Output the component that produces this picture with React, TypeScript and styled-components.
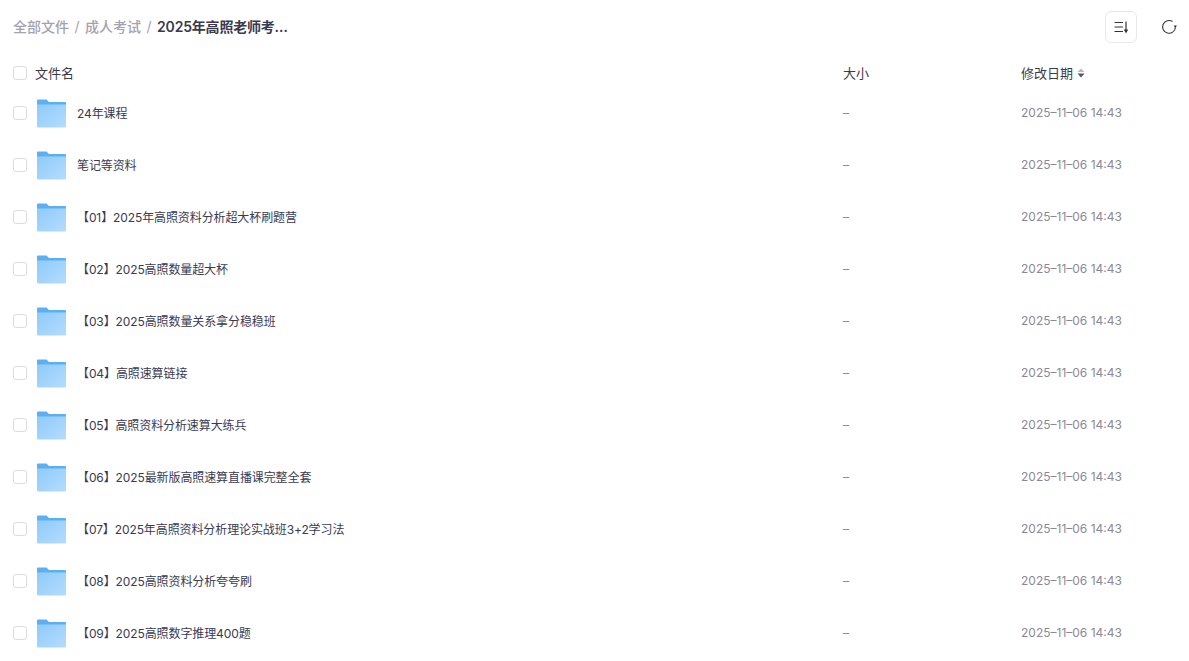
import { createGlobalStyle } from 'styled-components'
import styled from 'styled-components'

const GlobalStyle = createGlobalStyle`
  html, body {
    margin: 0;
    height: 100%;
    overflow: hidden;
    background: #fff;
  }
  * {
    box-sizing: border-box;
  }
`

const Page = styled.div`
  width: 1189px;
  height: 661px;
  overflow: hidden;
  padding: 0 4px 0 13px;
  font-family: Inter, "Noto Sans CJK SC", sans-serif;
  color: #25262f;
`

const TopBar = styled.header`
  height: 54px;
  margin-bottom: 5px;
  display: flex;
  align-items: center;
  justify-content: space-between;
`

const Crumbs = styled.nav`
  display: flex;
  align-items: center;
  padding-bottom: 2px;
  font-size: 14px;
  font-weight: 500;
  color: #a3a3ad;
`

const Sep = styled.span`
  margin: 0 5.5px;
  font-weight: 400;
`

const Current = styled.span`
  color: #3a3a4e;
  font-weight: 600;
  letter-spacing: -0.2px;
`

const Tools = styled.div`
  display: flex;
  align-items: center;
  gap: 16px;
`

const SortButton = styled.button`
  width: 32px;
  height: 32px;
  padding: 0;
  display: flex;
  align-items: center;
  justify-content: center;
  background: #fff;
  border: 1px solid #e8e8ec;
  border-radius: 6px;
`

const RefreshButton = styled.button`
  width: 32px;
  height: 32px;
  padding: 0;
  display: flex;
  align-items: center;
  justify-content: center;
  background: none;
  border: 0;
`

const Row = styled.div<{ $head?: boolean }>`
  display: grid;
  grid-template-columns: 22px 808px 178px 1fr;
  align-items: center;
  height: ${p => (p.$head ? '28px' : '52px')};
  font-size: 12px;
`

const Check = styled.span`
  width: 14px;
  height: 14px;
  background: #fff;
  border: 1px solid #dcdce0;
  border-radius: 3px;
`

const HeadCell = styled.div`
  font-size: 13px;
  line-height: 18px;
  margin-top: -1px;
  color: #3b3b48;
  display: flex;
  align-items: center;
  gap: 4px;
`

const NameCell = styled.div`
  display: flex;
  align-items: center;
  gap: 10px;
  margin-left: 1px;
  color: #3a3a52;
`

const FileName = styled.span`
  letter-spacing: -0.1px;
  padding-bottom: 2px;
`

const Muted = styled.div`
  color: #8a8a96;
  font-size: 12px;
  padding-bottom: 2px;
`

const Folder = ({ id }: { id: number }) => (
  <svg width="31" height="29" viewBox="0 0 31 29">
    <defs>
      <linearGradient id={`f${id}`} x1="0" y1="0" x2="1" y2="1">
        <stop offset="0" stopColor="#8ecbfa" />
        <stop offset="1" stopColor="#b5dcfd" />
      </linearGradient>
    </defs>
    <path d="M1 1.500a1 1 0 0 1 1-1h8.500L13 3h16a1 1 0 0 1 1 1v5H1z" fill="#5cb0f1" />
    <path d="M1 5.500h29V27.500a1 1 0 0 1-1 1H2a1 1 0 0 1-1-1z" fill={`url(#f${id})`} />
  </svg>
)

const SortIcon = () => (
  <svg width="16" height="16" viewBox="0 0 16 16" fill="none" stroke="#33333f" strokeWidth="1.200">
    <path d="M1.500 3.500h8.500M1.500 8h8.500M1.500 12.500h8.500M13 2.500v10" />
    <path d="M10.800 10.500h4.400L13 14.500z" fill="#33333f" stroke="none" />
  </svg>
)

const RefreshIcon = () => (
  <svg width="16" height="16" viewBox="0 0 16 16" fill="none" stroke="#33333f" strokeWidth="1.100">
    <path d="M11.500 2.500A6.400 6.400 0 1 0 14.400 8.500" />
    <path d="M12.700 6.600h3.200L14.300 9.200z" fill="#33333f" stroke="none" />
  </svg>
)

const Caret = () => (
  <svg width="8" height="10" viewBox="0 0 8 10">
    <path d="M4 0.500L7.500 4h-7z" fill="#b9b9c0" />
    <path d="M4 9.500L7.500 5.500h-7z" fill="#55555f" />
  </svg>
)

const items = [
  '24年课程',
  '笔记等资料',
  '【01】2025年高照资料分析超大杯刷题营',
  '【02】2025高照数量超大杯',
  '【03】2025高照数量关系拿分稳稳班',
  '【04】高照速算链接',
  '【05】高照资料分析速算大练兵',
  '【06】2025最新版高照速算直播课完整全套',
  '【07】2025年高照资料分析理论实战班3+2学习法',
  '【08】2025高照资料分析夸夸刷',
  '【09】2025高照数字推理400题',
]

export default function App() {
  return (
    <Page>
      <GlobalStyle />
      <TopBar>
        <Crumbs>
          全部文件<Sep>/</Sep>成人考试<Sep>/</Sep>
          <Current>2025年高照老师考…</Current>
        </Crumbs>
        <Tools>
          <SortButton><SortIcon /></SortButton>
          <RefreshButton><RefreshIcon /></RefreshButton>
        </Tools>
      </TopBar>
      <Row $head>
        <Check />
        <HeadCell>文件名</HeadCell>
        <HeadCell>大小</HeadCell>
        <HeadCell>修改日期<Caret /></HeadCell>
      </Row>
      {items.map((name, i) => (
        <Row key={name}>
          <Check />
          <NameCell>
            <Folder id={i} />
            <FileName>{name}</FileName>
          </NameCell>
          <Muted>–</Muted>
          <Muted>2025–11–06 14:43</Muted>
        </Row>
      ))}
    </Page>
  )
}
